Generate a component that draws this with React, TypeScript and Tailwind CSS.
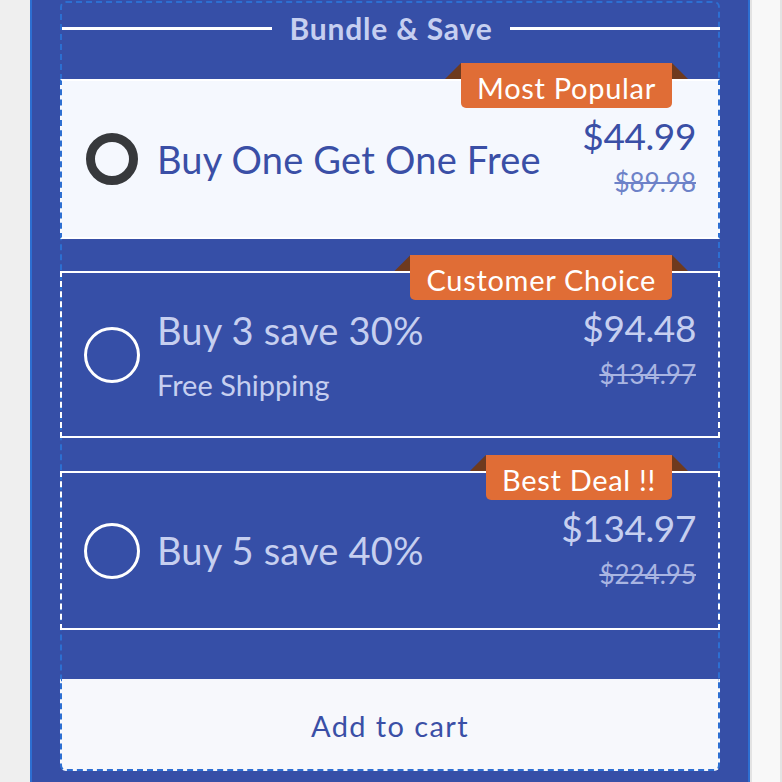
import React from "react";

type Opt = {
  title: string;
  sub?: string;
  price: string;
  old: string;
  badge: string;
  selected?: boolean;
  h: string;
  mt: string;
};

const Badge = ({ label }: { label: string }) => (
  <div className="absolute right-[46px] top-[-18px] flex">
    <div className="absolute left-[-16px] top-0 h-[16px] w-[16px] bg-[#6e3a1e] [clip-path:polygon(100%_0,100%_100%,0_100%)]" />
    <div className="absolute right-[-16px] top-0 h-[16px] w-[16px] bg-[#6e3a1e] [clip-path:polygon(0_0,100%_100%,0_100%)]" />
    <div className="relative flex h-[45px] items-center rounded-b-[5px] bg-[#e06d36] px-[16px] pt-[3px] text-[29px] leading-none tracking-[0.7px] text-white">
      {label}
    </div>
  </div>
);

const Card = ({ o }: { o: Opt }) => {
  const sel = o.selected;
  return (
    <div
      className={`relative -mx-[2px] flex items-center border-x-2 border-y-2 border-dashed border-y-white pl-[22px] pr-[22px] ${
        sel ? "border-x-[#2d6fd2] bg-[#f5f8fe]" : "border-x-white"
      } ${o.h} ${o.mt}`}
      style={{ borderTopStyle: "solid", borderBottomStyle: "solid" }}
    >
      <Badge label={o.badge} />
      <div className="flex w-[56px] shrink-0 items-center justify-center">
        {sel ? (
          <div className="h-[52px] w-[52px] rounded-full border-[9px] border-[#37393c]" />
        ) : (
          <div className="h-[56px] w-[56px] rounded-full border-[3px] border-white" />
        )}
      </div>
      <div className="ml-[17px] flex flex-1 flex-col">
        <div className={`text-[38px] tracking-[0.2px] ${sel ? "text-[#3a4fa6]" : "text-[#c6cff0]"}`}>{o.title}</div>
        {o.sub && <div className="mt-[4px] text-[29px] text-[#c6cff0]">{o.sub}</div>}
      </div>
      <div className="flex flex-col items-end self-start pt-[33px]">
        <div className={`text-[37px] leading-[44px] tracking-[-0.4px] ${sel ? "text-[#3a4fa6]" : "text-[#c6cff0]"}`}>
          {o.price}
        </div>
        <div
          className={`mt-[8px] text-[26px] leading-[32px] line-through decoration-2 ${
            sel ? "text-[#6d82c8]" : "text-[#a9b5e2]"
          }`}
        >
          {o.old}
        </div>
      </div>
    </div>
  );
};

const opts: Opt[] = [
  { title: "Buy One Get One Free", price: "$44.99", old: "$89.98", badge: "Most Popular", selected: true, h: "h-[160px]", mt: "mt-[26px]" },
  { title: "Buy 3 save 30%", sub: "Free Shipping", price: "$94.48", old: "$134.97", badge: "Customer Choice", h: "h-[167px]", mt: "mt-[32px]" },
  { title: "Buy 5 save 40%", price: "$134.97", old: "$224.95", badge: "Best Deal !!", h: "h-[159px]", mt: "mt-[33px]" },
];

export default function App() {
  return (
    <div className="flex h-[782px] w-[782px] overflow-hidden font-['Lato',sans-serif]">
      <div className="w-[30px] shrink-0 bg-[#efefef]" />
      <div className="w-[720px] shrink-0 border-x-2 border-[#2d6fd2] bg-[#364fa7] px-[28px]">
        <div className="mt-[1px] flex flex-col rounded-[6px] border-2 border-dashed border-[#2d6fd2]">
          <div className="flex h-[50px] items-center">
            <div className="h-[3px] flex-1 bg-white" />
            <div className="px-[17px] text-[30px] font-bold leading-none tracking-[0.8px] text-[#c6cff0]">
              Bundle &amp; Save
            </div>
            <div className="-mr-[2px] h-[3px] flex-1 bg-white" />
          </div>
          {opts.map((o) => (
            <Card key={o.title} o={o} />
          ))}
          <div className="-mx-[2px] -mb-[2px] mt-[49px] flex h-[92px] items-center justify-center rounded-b-[6px] border-x-2 border-b-2 border-dashed border-[#2d6fd2] bg-[#f7f8fc] pt-[3px] text-[29px] tracking-[1.4px] text-[#3a4fa6]">
            Add to cart
          </div>
        </div>
      </div>
      <div className="flex-1 border-x-2 border-l-[#e3e3e3] border-r-[#e3e3e3] bg-[#f8f8f8]" />
    </div>
  );
}
